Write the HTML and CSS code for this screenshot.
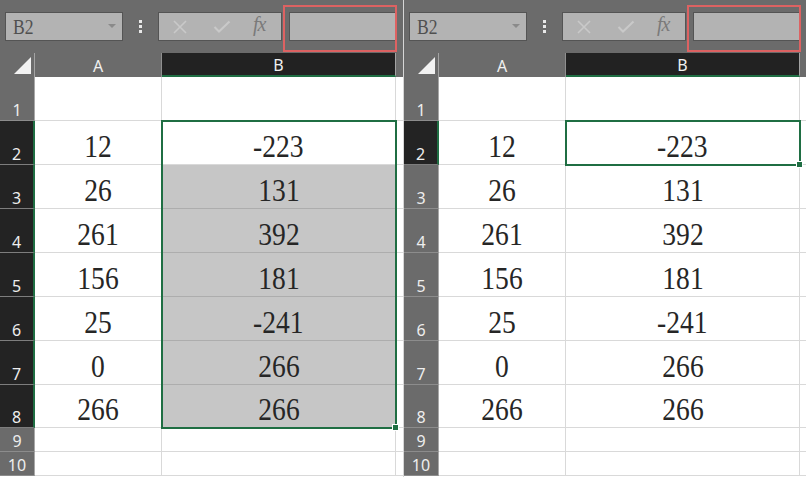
FILE: index.html
```html
<!DOCTYPE html>
<html lang="zh-Hant">
<head>
<meta charset="utf-8">
<title>Excel selection</title>
<link rel="stylesheet" href="styles.css">
</head>
<body>
<div class="app">
  <section class="panel">
    <header class="toolbar">
      <div class="namebox"><span class="ref">B2</span><span class="caret"></span></div>
      <div class="vdots"><i></i><i></i><i></i></div>
      <div class="fbtns">
        <svg class="ico" width="14" height="14" viewBox="0 0 14 14"><path d="M1 1L13 13M13 1L1 13" stroke="#c9c9c9" stroke-width="1.6" fill="none"/></svg>
        <svg class="ico" width="18" height="14" viewBox="0 0 18 14"><path d="M1.5 7L6 11.5L16.5 1.5" stroke="#c9c9c9" stroke-width="2" fill="none"/></svg>
        <span class="fx">fx</span>
      </div>
      <div class="finput"></div>
      <div class="mark"></div>
    </header>
    <div class="sheet">
      <div class="corner"><span class="tri"></span></div>
      <div class="ch">A</div>
      <div class="ch on">B</div>
      <div class="ch rest"></div>

      <div class="rh">1</div><div class="c"></div><div class="c"></div><div class="c rest"></div>
      <div class="rh on">2</div><div class="c"><span>12</span></div><div class="c"><span>-223</span></div><div class="c rest"></div>
      <div class="rh on">3</div><div class="c"><span>26</span></div><div class="c sel"><span>131</span></div><div class="c rest"></div>
      <div class="rh on">4</div><div class="c"><span>261</span></div><div class="c sel"><span>392</span></div><div class="c rest"></div>
      <div class="rh on">5</div><div class="c"><span>156</span></div><div class="c sel"><span>181</span></div><div class="c rest"></div>
      <div class="rh on">6</div><div class="c"><span>25</span></div><div class="c sel"><span>-241</span></div><div class="c rest"></div>
      <div class="rh on">7</div><div class="c"><span>0</span></div><div class="c sel"><span>266</span></div><div class="c rest"></div>
      <div class="rh on">8</div><div class="c"><span>266</span></div><div class="c sel"><span>266</span></div><div class="c rest"></div>
      <div class="rh">9</div><div class="c"></div><div class="c"></div><div class="c rest"></div>
      <div class="rh">10</div><div class="c"></div><div class="c"></div><div class="c rest"></div>

      <div class="selbox range"><i class="handle"></i></div>
    </div>
  </section>

  <section class="panel second">
    <header class="toolbar">
      <div class="namebox"><span class="ref">B2</span><span class="caret"></span></div>
      <div class="vdots"><i></i><i></i><i></i></div>
      <div class="fbtns">
        <svg class="ico" width="14" height="14" viewBox="0 0 14 14"><path d="M1 1L13 13M13 1L1 13" stroke="#c9c9c9" stroke-width="1.6" fill="none"/></svg>
        <svg class="ico" width="18" height="14" viewBox="0 0 18 14"><path d="M1.5 7L6 11.5L16.5 1.5" stroke="#c9c9c9" stroke-width="2" fill="none"/></svg>
        <span class="fx">fx</span>
      </div>
      <div class="finput"></div>
      <div class="mark"></div>
    </header>
    <div class="sheet">
      <div class="corner"><span class="tri"></span></div>
      <div class="ch">A</div>
      <div class="ch on">B</div>
      <div class="ch rest"></div>

      <div class="rh">1</div><div class="c"></div><div class="c"></div><div class="c rest"></div>
      <div class="rh on">2</div><div class="c"><span>12</span></div><div class="c"><span>-223</span></div><div class="c rest"></div>
      <div class="rh">3</div><div class="c"><span>26</span></div><div class="c"><span>131</span></div><div class="c rest"></div>
      <div class="rh">4</div><div class="c"><span>261</span></div><div class="c"><span>392</span></div><div class="c rest"></div>
      <div class="rh">5</div><div class="c"><span>156</span></div><div class="c"><span>181</span></div><div class="c rest"></div>
      <div class="rh">6</div><div class="c"><span>25</span></div><div class="c"><span>-241</span></div><div class="c rest"></div>
      <div class="rh">7</div><div class="c"><span>0</span></div><div class="c"><span>266</span></div><div class="c rest"></div>
      <div class="rh">8</div><div class="c"><span>266</span></div><div class="c"><span>266</span></div><div class="c rest"></div>
      <div class="rh">9</div><div class="c"></div><div class="c"></div><div class="c rest"></div>
      <div class="rh">10</div><div class="c"></div><div class="c"></div><div class="c rest"></div>

      <div class="selbox single"><i class="handle"></i></div>
    </div>
  </section>
</div>
</body>
</html>
```
FILE: styles.css
```css
* { box-sizing: border-box; }
html, body { margin: 0; padding: 0; }
body { width: 806px; height: 477px; overflow: hidden; background: #fff; font-family: "Noto Sans", "Liberation Sans", sans-serif; }

.app { display: flex; width: 806px; height: 477px; }
.panel { width: 403px; height: 477px; overflow: hidden; display: flex; flex-direction: column; background: #fff; }
.panel.second { width: 403px; border-left: 1px solid #d6d6d6; }

.toolbar { position: relative; height: 53px; flex: none; background: #6b6b6b; display: flex; align-items: flex-start; padding-top: 12px; padding-left: 5px; }
.namebox { width: 118px; height: 29px; background: #b3b3b3; border: 1px solid #545454; display: flex; align-items: center; justify-content: space-between; padding: 1px 6px 0 7px; }
.ref { font-family: "Liberation Serif", serif; font-size: 20px; color: #505050; display: inline-block; transform: scaleX(0.88); transform-origin: left center; }
.caret { width: 0; height: 0; border-left: 4px solid transparent; border-right: 4px solid transparent; border-top: 4px solid #8a8a8a; margin-top: -2px; }
.vdots { width: 35px; height: 29px; display: flex; flex-direction: column; align-items: center; justify-content: center; gap: 2px; }
.vdots i { display: block; width: 3px; height: 3px; background: #e8e8e8; }
.fbtns { width: 124px; height: 29px; background: #b3b3b3; border: 1px solid #545454; display: flex; align-items: center; padding-left: 14px; gap: 0; }
.fbtns .ico { flex: none; }
.fbtns .ico:nth-child(1) { margin-right: 26px; }
.fbtns .ico:nth-child(2) { margin-right: 22px; }
.fx { font-family: "Liberation Serif", serif; font-style: italic; font-size: 20px; color: #7a7a7a; letter-spacing: -1px; margin-top: -4px; }
.finput { width: 107px; height: 29px; margin-left: 7px; background: #b3b3b3; border: 1px solid #545454; }
.mark { position: absolute; left: 283px; top: 5px; width: 114px; height: 47px; border: 2px solid #dd6262; }

.sheet { position: relative; flex: 1; display: grid; grid-template-columns: 35px 127px 234px 1fr; grid-template-rows: 24px 44px 44px 44px 44px 44px 44px 44px 43px 24px 24px 1fr; }

.corner { background: #6b6b6b; border-right: 1px solid #a3a3a3; position: relative; display: flex; align-items: flex-end; justify-content: flex-end; padding: 0 3px 3px 0; }
.tri { width: 0; height: 0; border-left: 17px solid transparent; border-bottom: 17px solid #f2f2f2; }
.ch { background: #6b6b6b; color: #f0f0f0; font-size: 16px; display: flex; align-items: center; justify-content: center; border-right: 1px solid #8f8f8f; padding-top: 1px; }
.ch.on { background: #222; border-bottom: 2px solid #1f6e43; border-right: 1px solid #a3a3a3; }
.ch.rest { border-right: none; }

.rh { background: #6b6b6b; color: #eeeeee; font-size: 16px; line-height: 16px; display: flex; align-items: flex-end; justify-content: center; padding-bottom: 2px; border-bottom: 1px solid #8c8c8c; border-right: 1px solid #a8a8a8; }
.rh.on { background: #232323; border-right: 2px solid #1f6e43; border-bottom-color: #7d7d7d; }

.c { background: #fff; border-right: 1px solid #d9d9d9; border-bottom: 1px solid #d9d9d9; display: flex; align-items: flex-end; justify-content: center; padding-bottom: 2px; font-family: "Liberation Serif", serif; font-size: 32px; line-height: 32px; color: #262626; }
.c span { display: inline-block; transform: scaleX(0.86); }
.c.sel { background: #c6c6c6; border-bottom-color: #adadad; }
.c.rest { border-right: none; }

.selbox { position: absolute; grid-column: 3 / 4; top: -1px; left: -1px; right: -1px; bottom: -1px; border: 2px solid #1f6e43; pointer-events: none; }
.selbox.range { grid-row: 3 / 10; }
.selbox.single { grid-row: 3 / 4; }
.handle { position: absolute; right: -4px; bottom: -4px; width: 7px; height: 7px; background: #1f6e43; border: 1px solid #fff; }
```
